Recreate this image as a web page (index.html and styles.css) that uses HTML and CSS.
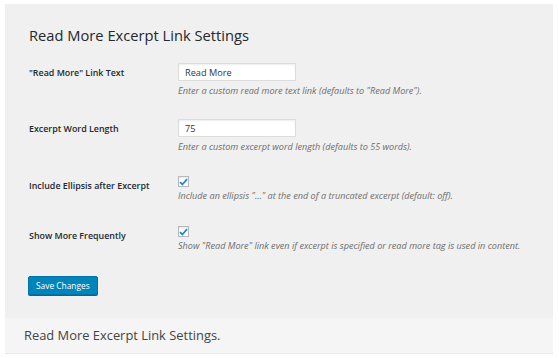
FILE: index.html
```html
<!DOCTYPE html>
<html>

<head>
    <title>Read More Excerpt Link Settings</title>
    <link rel="stylesheet" href="styles.css">
</head>

<body>
    <div class="page">
        <div class="settings-panel">
            <h2 class="title">Read More Excerpt Link Settings</h2>
            <form>
                <div class="form-row text-row">
                    <label for="link-text">"Read More" Link Text</label>
                    <div class="field">
                        <input type="text" id="link-text" value="Read More">
                        <p class="description">Enter a custom read more text link (defaults to "Read More").</p>
                    </div>
                </div>
                <div class="form-row text-row">
                    <label for="word-length">Excerpt Word Length</label>
                    <div class="field">
                        <input type="text" id="word-length" value="75">
                        <p class="description">Enter a custom excerpt word length (defaults to 55 words).</p>
                    </div>
                </div>
                <div class="form-row check-row">
                    <label for="ellipsis">Include Ellipsis after Excerpt</label>
                    <div class="field">
                        <span class="checkbox" id="ellipsis">
                            <svg width="9" height="8" viewBox="0 0 9 8"><path d="M1 4.2 L3.4 6.5 L8 1.2" fill="none" stroke="#1e8cbe" stroke-width="1.8"/></svg>
                        </span>
                        <p class="description">Include an ellipsis "..." at the end of a truncated excerpt (default: off).</p>
                    </div>
                </div>
                <div class="form-row check-row last-check">
                    <label for="frequently">Show More Frequently</label>
                    <div class="field">
                        <span class="checkbox" id="frequently">
                            <svg width="9" height="8" viewBox="0 0 9 8"><path d="M1 4.2 L3.4 6.5 L8 1.2" fill="none" stroke="#1e8cbe" stroke-width="1.8"/></svg>
                        </span>
                        <p class="description">Show "Read More" link even if excerpt is specified or read more tag is used in content.</p>
                    </div>
                </div>
                <div class="submit-row">
                    <button type="submit" class="save-button">Save Changes</button>
                </div>
            </form>
        </div>
        <div class="footer">Read More Excerpt Link Settings.</div>
    </div>
</body>

</html>
```

FILE: styles.css
```css
body {
    margin: 0;
    background-color: #fff;
    font-family: "Open Sans", "Noto Sans", sans-serif;
    color: #23282d;
}

.page {
    padding: 4px 6px 0 5px;
}

.settings-panel {
    background-color: #f0f0f0;
    padding: 20px 24px 23px 24px;
}

.title {
    margin: 0;
    font-size: 14.7px;
    line-height: 22px;
    font-weight: 400;
    color: #23282d;
}

form {
    margin-top: 17px;
}

.form-row {
    display: flex;
}

.form-row + .form-row {
    margin-top: 21px;
}

.form-row.check-row {
    margin-top: 22px;
}

.form-row.last-check {
    margin-top: 23px;
}

label {
    width: 149px;
    flex-shrink: 0;
    font-size: 8.9px;
    font-weight: 600;
    color: #23282d;
}

.text-row label {
    line-height: 20px;
}

.check-row label {
    padding-top: 3px;
    line-height: 14px;
}

.field {
    display: flex;
    flex-direction: column;
    align-items: flex-start;
}

input[type="text"] {
    width: 118px;
    height: 18px;
    box-sizing: border-box;
    margin: 0;
    padding: 0 6px;
    border: 1px solid #ddd;
    box-shadow: inset 0 1px 2px rgba(0, 0, 0, 0.07);
    background-color: #fff;
    font-family: inherit;
    font-size: 9.2px;
    color: #32373c;
}

.checkbox {
    display: flex;
    align-items: center;
    justify-content: center;
    width: 11px;
    height: 11px;
    box-sizing: border-box;
    border: 1px solid #b4b9be;
    background-color: #fff;
    box-shadow: inset 0 1px 2px rgba(0, 0, 0, 0.1);
}

.description {
    margin: 3px 0 0 0;
    font-size: 9.1px;
    line-height: 14px;
    font-style: italic;
    color: #6d6d6d;
    white-space: nowrap;
}

.check-row .description {
    margin-top: 2px;
}

.submit-row {
    margin-top: 23px;
}

.save-button {
    display: block;
    margin-left: -1px;
    height: 19px;
    padding: 0 7px;
    border: 1px solid #0073aa;
    border-radius: 2px;
    background-color: #0085ba;
    box-shadow: 0 1px 0 #006799;
    color: #fff;
    font-family: inherit;
    font-size: 8.4px;
    cursor: pointer;
}

.footer {
    background-color: #f5f5f5;
    border-bottom: 1px solid #e8e8e8;
    height: 35px;
    line-height: 35px;
    padding-left: 19px;
    font-size: 12.9px;
    color: #444;
}
```
